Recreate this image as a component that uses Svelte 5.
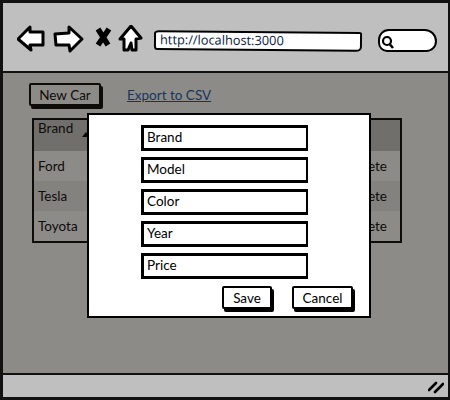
<script>
  const fields = ['Brand', 'Model', 'Color', 'Year', 'Price'];
  const cars = ['Ford', 'Tesla', 'Toyota'];
</script>

<div class="window">
  <header class="toolbar">
    <svg class="nav" width="130" height="30" viewBox="0 0 130 30" aria-hidden="true">
      <path d="M1 14 L13 2 L13 7 L26 7 L26 20 L13 20 L14 25 Z" class="outline" />
      <path d="M38 9 L52 8 L52 2 L65 14 L53 26 L52 20 L39 20 Z" class="outline" />
      <path d="M81 4 L91 20 M92 4 L81 20" class="cross" />
      <path d="M114 1 L124 13 L119 14 L119 25 L115 25 L114 18 L111 25 L107 25 L107 14 L103 14 Z" class="outline" />
    </svg>
    <div class="url">http://localhost:3000</div>
    <div class="search">
      <svg width="14" height="14" viewBox="0 0 14 14" aria-hidden="true">
        <circle cx="6" cy="6" r="4" fill="none" stroke="#000" stroke-width="2.2" />
        <path d="M9 9.5 L12 13" stroke="#000" stroke-width="2.6" />
      </svg>
    </div>
  </header>

  <main class="content">
    <div class="actions">
      <button type="button" class="sketch new">New Car</button>
      <a href="#export" class="export">Export to CSV</a>
    </div>

    <div class="table">
      <div class="head">
        <span>Brand</span>
        <i class="sort"></i>
      </div>
      {#each cars as car, i}
        <div class="row" class:odd={i % 2 === 1}>
          <span>{car}</span>
          <span>Delete</span>
        </div>
      {/each}
    </div>

    <div class="dim"></div>

    <div class="modal">
      {#each fields as field}
        <div class="field">{field}</div>
      {/each}
      <div class="buttons">
        <button type="button" class="sketch save">Save</button>
        <button type="button" class="sketch cancel">Cancel</button>
      </div>
    </div>
  </main>

  <footer class="status">
    <svg width="16" height="14" viewBox="0 0 16 14" aria-hidden="true">
      <path d="M1 10 L8 3 M7 12 L15 4" stroke="#000" stroke-width="2.6" stroke-linecap="round" />
    </svg>
  </footer>
</div>

<style>
  :global(body) {
    margin: 0;
  }

  .window {
    box-sizing: border-box;
    width: 450px;
    height: 400px;
    display: flex;
    flex-direction: column;
    border: 3px solid #111;
    border-right-width: 2px;
    font-family: Lato, sans-serif;
    font-size: 13.5px;
    color: #000;
    background: #fff;
    overflow: hidden;
  }

  .toolbar {
    flex: none;
    height: 70px;
    box-sizing: border-box;
    display: flex;
    align-items: center;
    padding: 6px 0 0 14px;
    background: #bfbfbf;
    border-bottom: 2px solid #111;
  }

  .nav {
    flex: none;
    margin-right: 7px;
  }

  .outline {
    fill: #fff;
    stroke: #000;
    stroke-width: 3;
    stroke-linejoin: round;
  }

  .cross {
    fill: none;
    stroke: #000;
    stroke-width: 5.5;
  }

  .url {
    box-sizing: border-box;
    width: 208px;
    height: 20px;
    padding-left: 4px;
    margin-top: 1px;
    background: #fff;
    border: 2px solid #000;
    border-radius: 5px 3px 6px 3px / 3px 2px 5px 4px;
    transform: rotate(0.5deg);
    line-height: 15px;
    font-family: "Open Sans", sans-serif;
    font-size: 12.8px;
    color: #0a1a3c;
    white-space: nowrap;
  }

  .search {
    box-sizing: border-box;
    width: 59px;
    height: 23px;
    margin-left: 16px;
    padding: 4px 0 0 1px;
    background: #fff;
    border: 2px solid #000;
    border-radius: 14px 16px 14px 12px;
  }

  .search svg {
    display: block;
  }

  .content {
    flex: 1;
    position: relative;
    padding: 10px 0 0 26px;
    overflow: hidden;
  }

  .actions {
    display: flex;
    align-items: center;
    gap: 26px;
    height: 23px;
  }

  .sketch {
    box-sizing: border-box;
    height: 23px;
    padding: 0;
    background: #fff;
    border: 2px solid #000;
    border-radius: 2px;
    box-shadow: 2px 3px 0 #000;
    font: inherit;
    color: #000;
  }

  .new {
    width: 72px;
  }

  .export {
    color: #0b57a8;
    font-size: 13.5px;
  }

  .table {
    width: 370px;
    height: 125px;
    box-sizing: border-box;
    margin: 12px 0 0 3px;
    border: 2px solid #000;
    background: #fff;
  }

  .head {
    position: relative;
    height: 31px;
    box-sizing: border-box;
    padding: 0 0 0 4px;
    background: #c6c6c6;
  }

  .sort {
    position: absolute;
    left: 48px;
    top: 12px;
    border-left: 4px solid transparent;
    border-right: 4px solid transparent;
    border-bottom: 5px solid #000;
  }

  .row {
    height: 30px;
    box-sizing: border-box;
    display: flex;
    justify-content: space-between;
    align-items: center;
    padding: 0 13px 0 4px;
  }

  .row.odd {
    background: #ececec;
  }

  .dim {
    position: absolute;
    inset: 0;
    background: rgba(27, 24, 18, 0.5);
  }

  .modal {
    position: absolute;
    left: 84px;
    top: 40px;
    width: 284px;
    height: 205px;
    box-sizing: border-box;
    padding: 10px 0 0 52px;
    display: flex;
    flex-direction: column;
    gap: 6px;
    background: #fff;
    border: 2px solid #000;
  }

  .field {
    box-sizing: border-box;
    width: 167px;
    height: 26px;
    padding-left: 3px;
    line-height: 18px;
    border: 2px solid #000;
    border-top-width: 3px;
    border-left-width: 3px;
    border-bottom-width: 3px;
  }

  .buttons {
    display: flex;
    margin: 1px 0 0 81px;
    gap: 20px;
  }

  .save {
    width: 50px;
  }

  .cancel {
    width: 61px;
  }

  .status {
    flex: none;
    height: 24px;
    box-sizing: border-box;
    display: flex;
    justify-content: flex-end;
    align-items: center;
    padding: 2px 4px 0 0;
    background: #bfbfbf;
    border-top: 2px solid #111;
  }
</style>
